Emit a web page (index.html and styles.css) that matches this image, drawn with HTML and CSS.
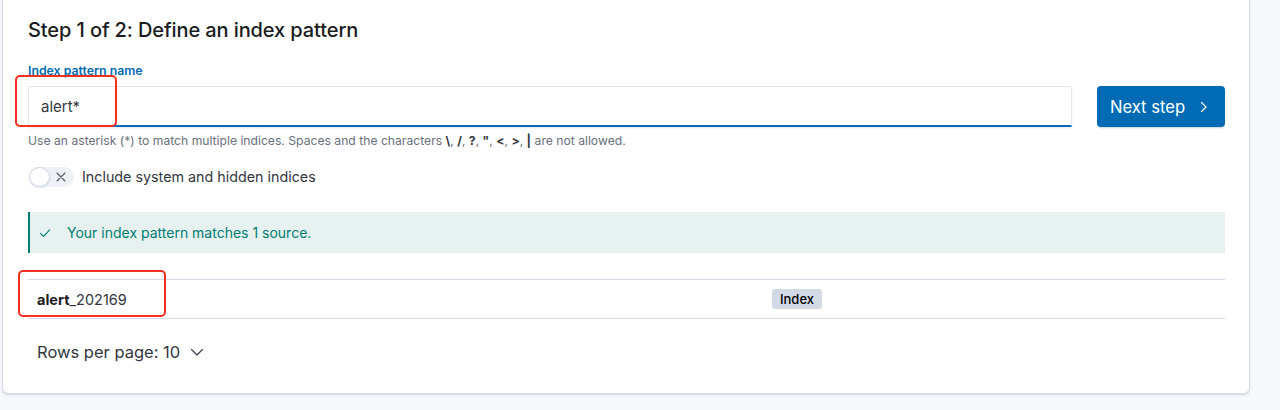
FILE: index.html
```html
<!DOCTYPE html>
<html lang="en">
<head>
<meta charset="utf-8">
<title>Define an index pattern</title>
<link rel="stylesheet" href="styles.css">
</head>
<body>
<div class="page">
  <section class="panel">
    <h2 class="title">Step 1 of 2: Define an index pattern</h2>

    <div class="form-grid">
      <label class="label" for="pattern">Index pattern name</label>
      <div class="input-wrap">
        <input id="pattern" class="input" type="text" value="alert*">
      </div>
      <button class="btn" type="button">
        <span>Next step</span>
        <svg class="btn-icon" width="16" height="16" viewBox="0 0 16 16"><path d="M5.5 3.5 10 8l-4.5 4.5" fill="none" stroke="#fff" stroke-width="1.1" stroke-linecap="round" stroke-linejoin="round"/></svg>
      </button>
      <div class="help">Use an asterisk (*) to match multiple indices. Spaces and the characters <b>\</b>, <b>/</b>, <b>?</b>, <b>"</b>, <b>&lt;</b>, <b>&gt;</b>, <b>|</b> are not allowed.</div>
    </div>

    <div class="switch-row">
      <span class="switch">
        <span class="thumb"></span>
        <svg class="switch-x" width="12" height="12" viewBox="0 0 12 12"><path d="M2 2l8 8M10 2l-8 8" fill="none" stroke="#535966" stroke-width="1.1" stroke-linecap="round"/></svg>
      </span>
      <span class="switch-label">Include system and hidden indices</span>
    </div>

    <div class="callout">
      <svg class="check" width="12" height="12" viewBox="0 0 12 12"><path d="M1.5 6.3 4.6 9.3 10.6 2.8" fill="none" stroke="#017d73" stroke-width="1.1" stroke-linecap="round" stroke-linejoin="round"/></svg>
      <span>Your index pattern matches 1 source.</span>
    </div>

    <div class="table">
      <div class="row">
        <div class="cell"><b>alert</b>_202169</div>
        <div class="cell"><span class="badge">Index</span></div>
      </div>
    </div>

    <div class="pager">
      <span>Rows per page: 10</span>
      <svg class="pager-icon" width="14" height="14" viewBox="0 0 14 14"><path d="M1.5 4.5 7 10l5.5-5.5" fill="none" stroke="#343741" stroke-width="1.1" stroke-linecap="round" stroke-linejoin="round"/></svg>
    </div>

    <div class="annot annot-input"></div>
    <div class="annot annot-row"></div>
  </section>
</div>
</body>
</html>
```

FILE: styles.css
```css
* { box-sizing: border-box; }

html, body {
  margin: 0;
  background: #f7f8fc;
}

body {
  font-family: Inter, "Noto Sans", "Liberation Sans", sans-serif;
  color: #343741;
  -webkit-font-smoothing: antialiased;
}

.page {
  padding: 0 30px 0 2px;
  height: 410px;
}

.panel {
  position: relative;
  background: #fff;
  border: 1px solid #d3dae6;
  border-top: none;
  border-radius: 0 0 6px 6px;
  box-shadow: 0 2px 2px -1px rgba(152, 162, 179, 0.3), 0 1px 5px -2px rgba(152, 162, 179, 0.3);
  padding: 18px 24px 29px 25px;
}

.title {
  margin: 0 0 20px;
  font-size: 20px;
  line-height: 24px;
  font-weight: 500;
  color: #1a1c21;
  letter-spacing: -0.1px;
}

.form-grid {
  display: grid;
  grid-template-columns: 1fr 128px;
  column-gap: 25px;
}

.label {
  grid-column: 1 / 2;
  font-size: 12.3px;
  line-height: 18px;
  font-weight: 600;
  color: #006bb4;
  margin-bottom: 6px;
}

.input-wrap {
  grid-column: 1 / 2;
  grid-row: 2;
}

.input {
  display: block;
  width: 100%;
  height: 41px;
  margin: 0;
  border: 1px solid #e3e8f0;
  border-bottom: 2px solid #006bb4;
  border-radius: 2px 2px 0 0;
  background: #fff;
  padding: 0 12px;
  font-family: inherit;
  font-size: 15px;
  color: #343741;
  outline: none;
  box-shadow: 0 2px 3px -1px rgba(152, 162, 179, 0.25);
}

.btn {
  grid-column: 2 / 3;
  grid-row: 2;
  height: 41px;
  display: flex;
  align-items: center;
  justify-content: center;
  gap: 11px;
  background: #006bb4;
  color: #fff;
  border: none;
  border-radius: 4px;
  font-family: inherit;
  font-size: 16.6px;
  font-weight: 400;
  padding: 0 10px;
  box-shadow: 0 2px 2px -1px rgba(54, 97, 126, 0.3);
}

.btn-icon { flex: none; }

.help {
  grid-column: 1 / 3;
  grid-row: 3;
  margin-top: 6px;
  font-size: 12.17px;
  line-height: 16px;
  color: #69707d;
}

.help b {
  font-weight: 700;
  color: #343741;
}

.switch-row {
  display: flex;
  align-items: center;
  gap: 8px;
  margin-top: 18px;
  height: 20px;
}

.switch {
  position: relative;
  flex: none;
  width: 45px;
  height: 20px;
  border-radius: 10px;
  background: #eef1f6;
  margin-left: 1px;
}

.thumb {
  position: absolute;
  left: 0;
  top: 0;
  width: 21px;
  height: 20px;
  border-radius: 50%;
  background: #fff;
  border: 1px solid #d3dae6;
  box-shadow: 0 1px 2px rgba(152, 162, 179, 0.3);
}

.switch-x {
  position: absolute;
  right: 7px;
  top: 4px;
}

.switch-label {
  font-size: 14.3px;
  line-height: 20px;
  color: #343741;
}

.callout {
  margin-top: 25px;
  height: 41px;
  display: flex;
  align-items: center;
  gap: 16px;
  padding-left: 9px;
  background: #e6f1f0;
  border-left: 2px solid #017d73;
  color: #017d73;
  font-size: 14px;
}

.check { flex: none; }

.table {
  margin-top: 26px;
  border-top: 1px solid #d3dae6;
  border-bottom: 1px solid #d3dae6;
}

.row {
  display: grid;
  grid-template-columns: 735px 1fr;
  height: 38px;
  align-items: center;
}

.cell {
  padding: 0 9px;
  font-size: 14.5px;
  color: #343741;
}

.cell b {
  font-weight: 700;
  color: #1a1c21;
}

.badge {
  display: inline-block;
  height: 20px;
  line-height: 20px;
  padding: 0 8px;
  border-radius: 3px;
  background: #d3dae6;
  color: #000;
  font-size: 13px;
  font-weight: 500;
}

.pager {
  margin-top: 21px;
  height: 24px;
  display: flex;
  align-items: center;
  gap: 10px;
  padding-left: 9px;
  font-size: 16.5px;
  color: #343741;
}

.annot {
  position: absolute;
  border: 2.5px solid #f5301e;
  border-radius: 5px;
  pointer-events: none;
}

.annot-input {
  left: 12px;
  top: 75px;
  width: 102px;
  height: 52px;
}

.annot-row {
  left: 15px;
  top: 270px;
  width: 148px;
  height: 47px;
}
```
